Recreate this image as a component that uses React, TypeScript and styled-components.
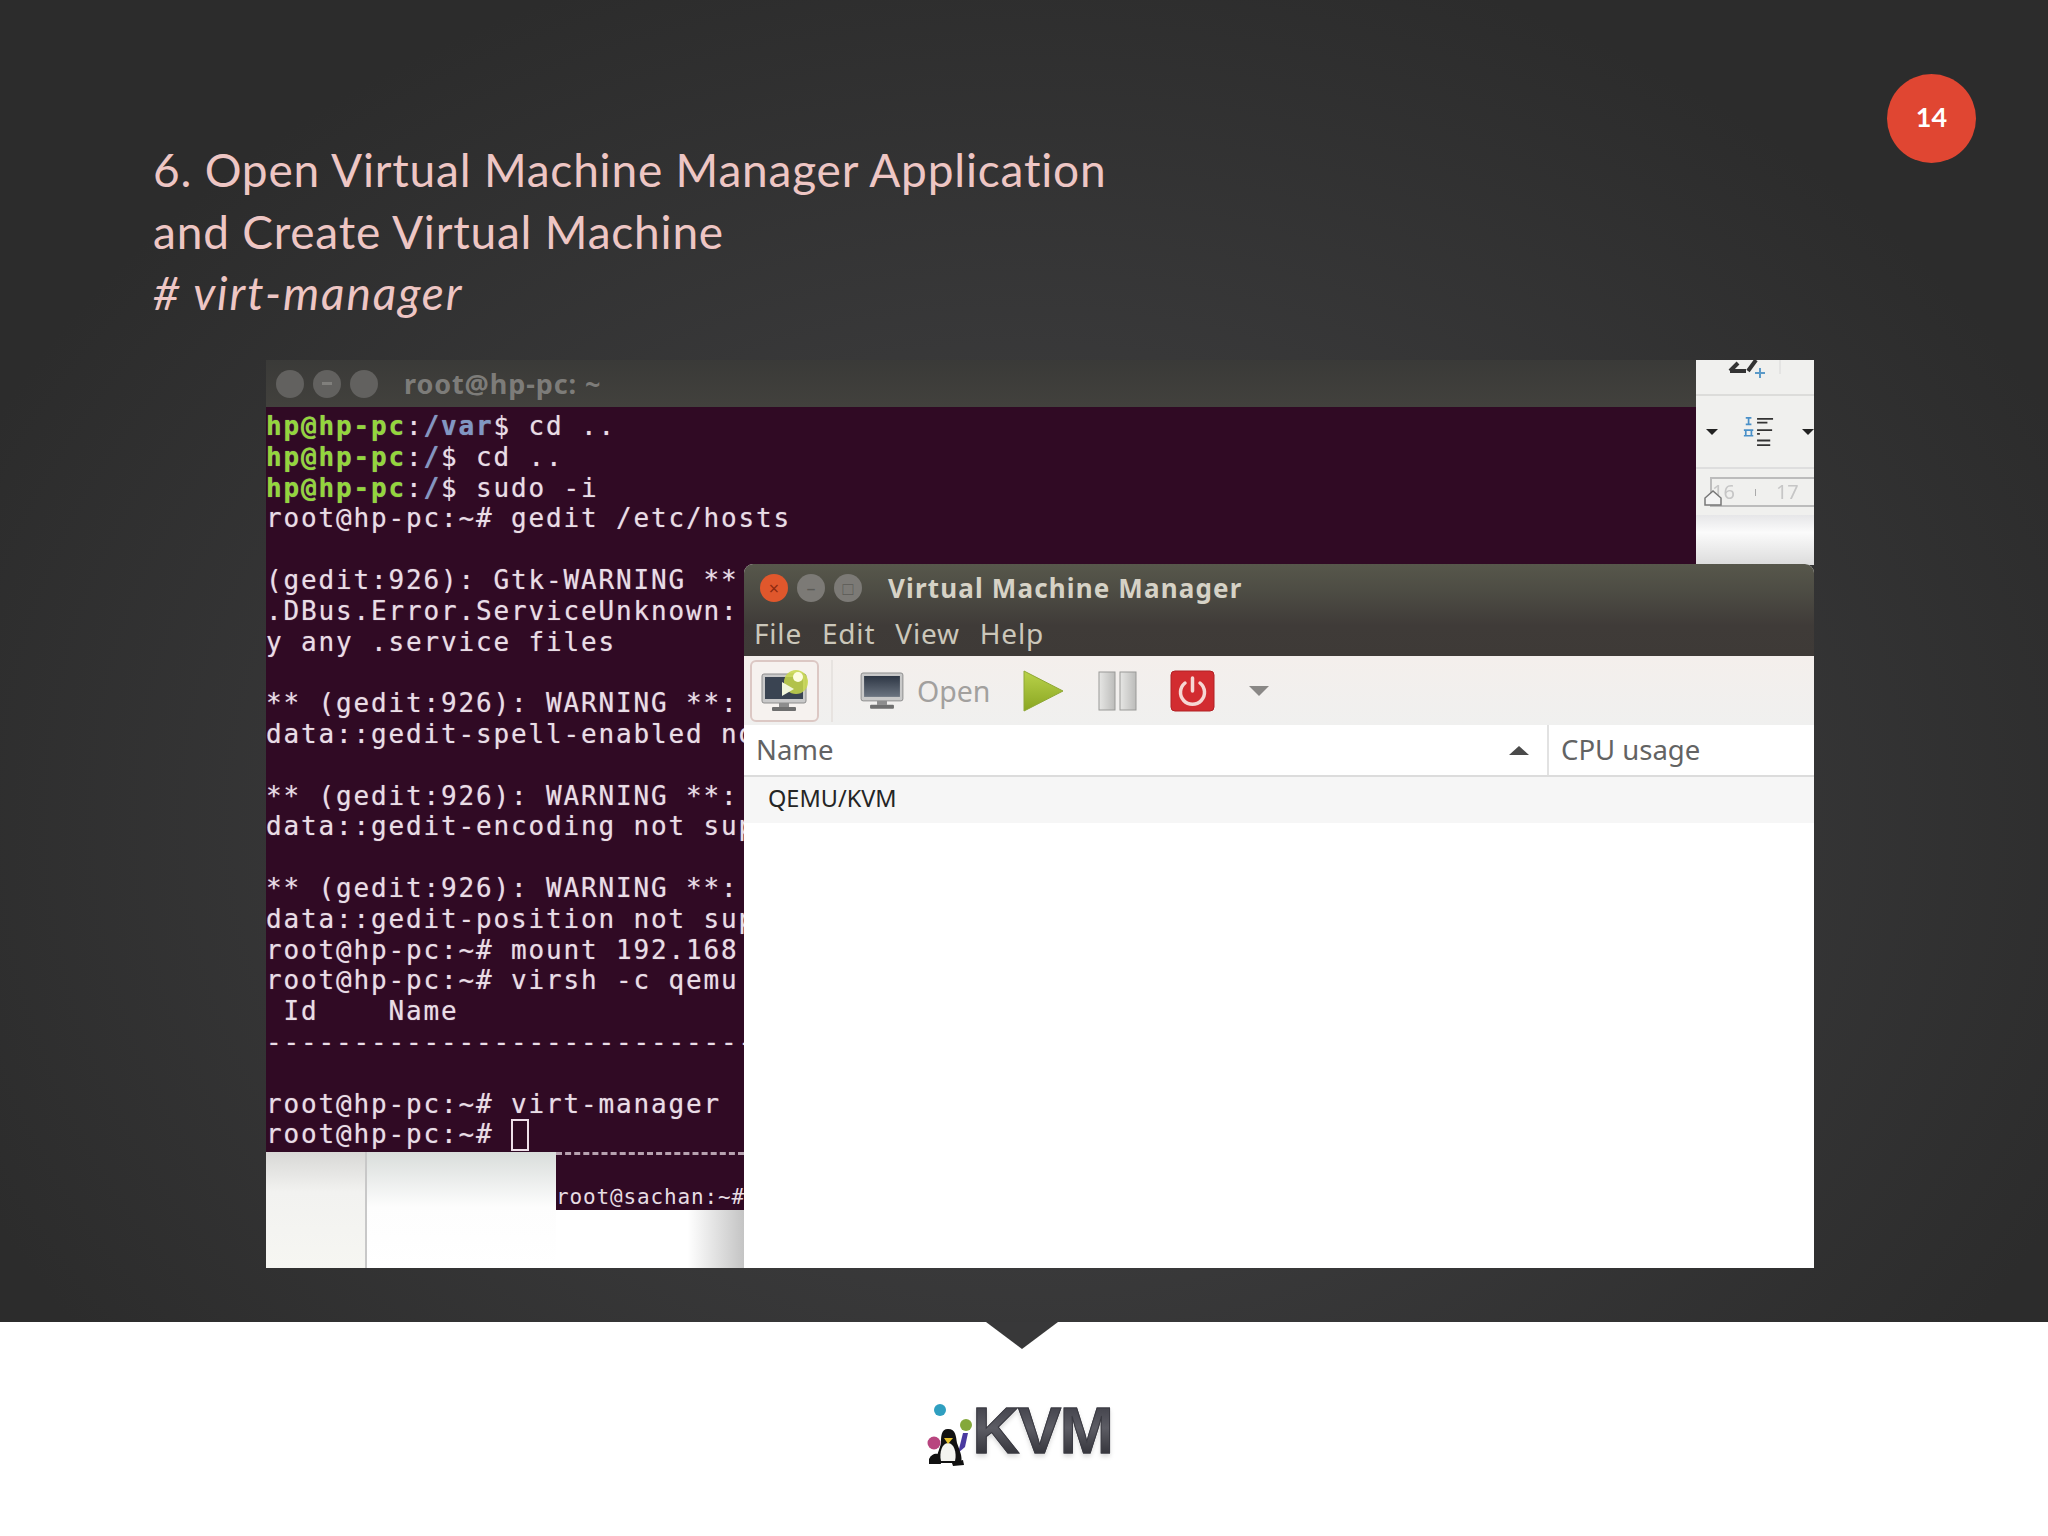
import React from "react";
import styled, { createGlobalStyle } from "styled-components";

const Global = createGlobalStyle`
  html, body { margin: 0; padding: 0; background: #fff; }
  #root { width: 2048px; height: 1536px; overflow: hidden; }
`;

const Slide = styled.div`
  position: relative;
  width: 2048px;
  height: 1536px;
  display: flex;
  flex-direction: column;
  background: #fff;
`;

const Stage = styled.section`
  position: relative;
  height: 1322px;
  flex: none;
  background:
    radial-gradient(ellipse 1150px 900px at 50% 62%, #414142 0%, #3a3a3b 45%, #2c2c2c 100%);
`;

const Heading = styled.h1`
  margin: 0;
  height: 360px;
  box-sizing: border-box;
  padding: 139px 0 0 153px;
  font-family: Lato, "Open Sans", sans-serif;
  font-weight: 400;
  font-size: 46px;
  line-height: 61.5px;
  color: #eec6c4;
`;

const HeadingLine = styled.div<{ $italic?: boolean }>`
  font-style: ${(p) => (p.$italic ? "italic" : "normal")};
  letter-spacing: ${(p) => (p.$italic ? "1.9px" : "0.8px")};
  white-space: pre;
`;

const PageBadge = styled.div`
  position: absolute;
  left: 1887px;
  top: 74px;
  width: 89px;
  height: 89px;
  box-sizing: border-box;
  padding-bottom: 4px;
  border-radius: 50%;
  background: #e04632;
  color: #fff;
  display: flex;
  align-items: center;
  justify-content: center;
  font-family: Lato, sans-serif;
  font-weight: 700;
  font-size: 27px;
`;

const Shot = styled.div`
  position: relative;
  margin-left: 266px;
  width: 1548px;
  height: 908px;
  display: flex;
  overflow: hidden;
  filter: blur(0.55px);
  font-family: "Noto Sans", sans-serif;
`;

const Terminal = styled.div`
  width: 1430px;
  flex: none;
  display: flex;
  flex-direction: column;
  background: #300a24;
`;

const TermTitleBar = styled.div`
  height: 47px;
  flex: none;
  display: flex;
  align-items: center;
  background: linear-gradient(#3a3a38, #42413d);
  padding-left: 10px;
  gap: 9px;
`;

const FadedDot = styled.span`
  width: 28px;
  height: 28px;
  border-radius: 50%;
  background: #62615f;
  display: flex;
  align-items: center;
  justify-content: center;
`;

const FadedGlyph = styled.span`
  width: 10px;
  height: 3px;
  background: #807f7c;
`;

const TermTitle = styled.span`
  margin-left: 17px;
  font-size: 27px;
  font-weight: 700;
  letter-spacing: 0.9px;
  color: #7d7c79;
`;

const TermBody = styled.div`
  flex: 1;
  padding-top: 4px;
  overflow: hidden;
  font-family: "DejaVu Sans Mono", monospace;
  font-size: 26px;
  letter-spacing: 1.85px;
  line-height: 30.8px;
  color: #e9dde6;
  text-shadow: 0 0 1px rgba(233, 221, 230, 0.55);
`;

const TermLine = styled.div`
  height: 30.8px;
  white-space: pre;
`;

const Green = styled.span`
  color: #93d63c;
  font-weight: 700;
`;

const Blue = styled.span`
  color: #7f97c4;
  font-weight: 700;
`;

const Cursor = styled.span`
  display: inline-block;
  width: 18px;
  height: 32px;
  box-sizing: border-box;
  border: 2px solid #efdfea;
  vertical-align: -8px;
`;

const BottomStrip = styled.div`
  height: 116px;
  flex: none;
  display: flex;
  background: #fff;
`;

const DockPanel = styled.div`
  width: 101px;
  flex: none;
  background: linear-gradient(#d8d8d6 0, #f2f2f0 40px, #f6f6f2 100%);
  border-right: 2px solid #c8c8c8;
  box-sizing: border-box;
`;

const SheetPanel = styled.div`
  width: 189px;
  flex: none;
  background: linear-gradient(#d9dddb 0, #fdfdfd 55px, #fff 100%);
`;

const BackTerminal = styled.div`
  width: 188px;
  flex: none;
  align-self: stretch;
  display: flex;
  flex-direction: column;
  background: linear-gradient(90deg, #fff 70%, #c4c4c4 100%);
`;

const BackTermScreen = styled.div`
  height: 58px;
  box-sizing: border-box;
  background: #300a24;
  border-top: 3px dashed #b7a2b0;
  overflow: hidden;
  font-family: "DejaVu Sans Mono", monospace;
  font-size: 21px;
  letter-spacing: 0.85px;
  line-height: 28px;
  color: #e6dce3;
  padding-top: 28px;
  white-space: pre;
`;

const OfficeWindow = styled.div`
  flex: 1;
  height: 205px;
  position: relative;
  overflow: hidden;
  display: flex;
  flex-direction: column;
  background: #f0f0ee;
`;

const OfficeTop = styled.div`
  height: 34px;
  flex: none;
  border-bottom: 2px solid #dcdcda;
  position: relative;
  overflow: hidden;
`;

const OfficeBar = styled.div`
  height: 71px;
  flex: none;
  border-bottom: 2px solid #dedede;
  display: flex;
  align-items: center;
  padding-left: 10px;
`;

const TinyArrow = styled.span<{ $after?: boolean }>`
  width: 0;
  height: 0;
  margin-left: ${(p) => (p.$after ? "28px" : "0")};
  border-left: 6px solid transparent;
  border-right: 6px solid transparent;
  border-top: 6px solid #222;
`;

const ListIcon = styled.svg`
  margin-left: 24px;
`;

const Ruler = styled.div`
  margin: 8px 0 0 14px;
  height: 26px;
  border: 2px solid #bcbcbc;
  border-right: none;
  display: flex;
  align-items: center;
  gap: 20px;
  font-size: 20px;
  line-height: 20px;
  color: #c6c6c6;
  position: relative;
`;

const RulerTick = styled.span`
  width: 1px;
  height: 7px;
  background: #aaa;
`;

const IndentMarker = styled.svg`
  position: absolute;
  left: -8px;
  top: 11px;
`;

const OfficeFoot = styled.div`
  flex: 1;
  background: linear-gradient(#e6e6e8 0, #fbfbfb 35%, #dcdcdc 100%);
  margin-top: 8px;
`;

const ManagerWindow = styled.div`
  position: absolute;
  left: 478px;
  top: 204px;
  right: 0;
  bottom: 0;
  display: flex;
  flex-direction: column;
  background: #fff;
  border-radius: 9px 9px 0 0;
  overflow: hidden;
`;

const ManagerChrome = styled.div`
  height: 92px;
  flex: none;
  background: linear-gradient(#57574b 0, #4c4b43 30px, #3f3b38 62px, #3e3a37 100%);
  display: flex;
  flex-direction: column;
`;

const ManagerTitleBar = styled.div`
  height: 46px;
  flex: none;
  display: flex;
  align-items: center;
  padding: 2px 0 0 16px;
  box-sizing: border-box;
  gap: 9px;
`;

const WinDot = styled.span<{ $close?: boolean }>`
  width: 28px;
  height: 28px;
  border-radius: 50%;
  background: ${(p) => (p.$close ? "#e0572c" : "#7c7a76")};
  display: flex;
  align-items: center;
  justify-content: center;
  font-size: 18px;
  line-height: 1;
  color: ${(p) => (p.$close ? "#8c2a10" : "#5b5a56")};
`;

const ManagerTitle = styled.span`
  margin-left: 17px;
  font-size: 26px;
  font-weight: 700;
  letter-spacing: 1.15px;
  color: #d6d2c6;
`;

const MenuRow = styled.nav`
  flex: 1;
  display: flex;
  align-items: center;
  padding-left: 10px;
  gap: 20px;
`;

const MenuItem = styled.span`
  font-size: 28px;
  line-height: 34px;
  letter-spacing: 0.8px;
  color: #cbc7ba;
`;

const Toolbar = styled.div`
  height: 69px;
  flex: none;
  display: flex;
  align-items: center;
  background: linear-gradient(#f4efec, #f0f0ef);
  padding-left: 6px;
`;

const ActiveTool = styled.div`
  width: 69px;
  height: 62px;
  box-sizing: border-box;
  border: 2px solid #dcc8c4;
  border-radius: 6px;
  display: flex;
  align-items: center;
  justify-content: center;
  background: #f6f2ef;
`;

const ToolDivider = styled.span`
  width: 2px;
  height: 62px;
  background: #e7e3e0;
  margin: 0 27px 0 12px;
`;

const OpenLabel = styled.span`
  margin: 0 32px 0 13px;
  font-size: 28.5px;
  line-height: 34px;
  color: #a2a09e;
`;

const ToolIcon = styled.svg<{ $gap: number }>`
  margin-right: ${(p) => p.$gap}px;
  flex: none;
`;

const MoreArrow = styled.span`
  width: 0;
  height: 0;
  border-left: 10px solid transparent;
  border-right: 10px solid transparent;
  border-top: 10px solid #8a8886;
`;

const HeaderRow = styled.div`
  height: 50px;
  flex: none;
  display: flex;
  background: #fff;
  border-bottom: 2px solid #dcdcdc;
  color: #636363;
  font-size: 27.5px;
  line-height: 34px;
`;

const NameHeader = styled.div`
  width: 805px;
  box-sizing: border-box;
  padding: 0 18px 0 12px;
  display: flex;
  align-items: center;
  justify-content: space-between;
  border-right: 2px solid #e2e2e2;
`;

const SortArrow = styled.span`
  width: 0;
  height: 0;
  border-left: 10px solid transparent;
  border-right: 10px solid transparent;
  border-bottom: 9px solid #4a4a4a;
`;

const CpuHeader = styled.div`
  padding-left: 12px;
  display: flex;
  align-items: center;
`;

const HostRow = styled.div`
  height: 46px;
  flex: none;
  box-sizing: border-box;
  padding: 0 0 5px 24px;
  display: flex;
  align-items: center;
  background: #f6f6f6;
  color: #252525;
  font-size: 23.5px;
`;

const Footer = styled.footer`
  flex: 1;
  position: relative;
  display: flex;
  justify-content: center;
  background: #fff;
`;

const Notch = styled.span`
  position: absolute;
  left: 986px;
  top: 0;
  width: 0;
  height: 0;
  border-left: 36px solid transparent;
  border-right: 36px solid transparent;
  border-top: 27px solid #383839;
`;

const Logo = styled.div`
  margin: 81px 0 0 -12px;
  height: 70px;
  display: flex;
  align-items: flex-start;
`;

const KvmWord = styled.span`
  margin: -3px 0 0 -3px;
  font-family: "Liberation Sans", sans-serif;
  font-weight: 700;
  font-size: 65px;
  line-height: 62px;
  letter-spacing: -1.4px;
  -webkit-text-stroke: 1px #3a3a42;
  background: linear-gradient(#3d3d46 0%, #5c5c64 45%, #2a2a30 100%);
  -webkit-background-clip: text;
  background-clip: text;
  color: transparent;
  filter: drop-shadow(0 3px 2px rgba(0, 0, 0, 0.14));
`;

const Monitor = ({ w = 44 }: { w?: number }) => (
  <svg width={w} height={w * 0.86} viewBox="0 0 44 38">
    <defs>
      <linearGradient id="scr" x1="0" y1="0" x2="0" y2="1">
        <stop offset="0" stopColor="#2d3644" />
        <stop offset="1" stopColor="#6b7480" />
      </linearGradient>
    </defs>
    <rect x="1" y="1" width="42" height="28" rx="2" fill="#c9c9c9" stroke="#8d8d8d" />
    <rect x="4" y="4" width="36" height="21" fill="url(#scr)" />
    <rect x="17" y="29" width="10" height="4" fill="#8d8d8d" />
    <rect x="10" y="33" width="24" height="4" rx="1" fill="#6f6f6f" />
  </svg>
);

const Penguin = () => (
  <svg width="52" height="66" viewBox="0 0 52 66">
    <circle cx="17" cy="7" r="6" fill="#2f9fc0" />
    <circle cx="43" cy="22" r="6" fill="#84a83a" />
    <circle cx="11" cy="40" r="6.5" fill="#b8457f" />
    <path d="M40 30 L45 30 L42 44 L35 50 Z" fill="#4a3aa0" />
    <path d="M25 26 C33 26 33 34 34 40 C36 46 40 54 38 60 L14 60 C12 54 17 46 18 40 C18 34 18 26 25 26 Z" fill="#111" />
    <path d="M25 40 C31 40 34 50 32 58 L18 58 C16 50 19 40 25 40 Z" fill="#f4f4f0" />
    <path d="M21 35 L30 35 L25 41 Z" fill="#e7c22c" />
    <path d="M6 56 C9 50 14 50 16 52 L18 61 L6 61 Z" fill="#111" />
    <path d="M29 60 L40 57 L41 62 L30 63 Z" fill="#111" />
  </svg>
);

type Seg = { t: string; k?: "g" | "b" };

const prompt = (path: string, rest: string): Seg[] => [
  { t: "hp@hp-pc", k: "g" },
  { t: ":" },
  { t: path, k: "b" },
  { t: rest },
];

const lines: Seg[][] = [
  prompt("/var", "$ cd .."),
  prompt("/", "$ cd .."),
  prompt("/", "$ sudo -i"),
  [{ t: "root@hp-pc:~# gedit /etc/hosts" }],
  [{ t: "" }],
  [{ t: "(gedit:926): Gtk-WARNING **" }],
  [{ t: ".DBus.Error.ServiceUnknown:" }],
  [{ t: "y any .service files" }],
  [{ t: "" }],
  [{ t: "** (gedit:926): WARNING **:" }],
  [{ t: "data::gedit-spell-enabled no" }],
  [{ t: "" }],
  [{ t: "** (gedit:926): WARNING **:" }],
  [{ t: "data::gedit-encoding not sup" }],
  [{ t: "" }],
  [{ t: "** (gedit:926): WARNING **:" }],
  [{ t: "data::gedit-position not sup" }],
  [{ t: "root@hp-pc:~# mount 192.168" }],
  [{ t: "root@hp-pc:~# virsh -c qemu" }],
  [{ t: " Id    Name" }],
  [{ t: "----------------------------" }],
  [{ t: "" }],
  [{ t: "root@hp-pc:~# virt-manager" }],
];

export default function App() {
  return (
    <Slide>
      <Global />
      <Stage>
        <Heading>
          <HeadingLine>6. Open Virtual Machine Manager Application</HeadingLine>
          <HeadingLine>and Create Virtual Machine</HeadingLine>
          <HeadingLine $italic># virt-manager</HeadingLine>
        </Heading>
        <PageBadge>14</PageBadge>
        <Shot>
          <Terminal>
            <TermTitleBar>
              <FadedDot />
              <FadedDot>
                <FadedGlyph />
              </FadedDot>
              <FadedDot />
              <TermTitle>root@hp-pc: ~</TermTitle>
            </TermTitleBar>
            <TermBody>
              {lines.map((l, i) => (
                <TermLine key={i}>
                  {l.map((s, j) =>
                    s.k === "g" ? (
                      <Green key={j}>{s.t}</Green>
                    ) : s.k === "b" ? (
                      <Blue key={j}>{s.t}</Blue>
                    ) : (
                      <span key={j}>{s.t}</span>
                    )
                  )}
                </TermLine>
              ))}
              <TermLine>
                root@hp-pc:~# <Cursor />
              </TermLine>
            </TermBody>
            <BottomStrip>
              <DockPanel />
              <SheetPanel />
              <BackTerminal>
                <BackTermScreen>root@sachan:~#</BackTermScreen>
              </BackTerminal>
            </BottomStrip>
          </Terminal>
          <OfficeWindow>
            <OfficeTop>
              <svg width="118" height="34" viewBox="0 0 118 34">
                <path d="M34 -6 L52 -6 M34 11 L50 11 M34 11 L42 3 M60 0 L52 11" stroke="#333" strokeWidth="4" fill="none" />
                <path d="M64 8 V18 M59 13 H69" stroke="#5b9ac8" strokeWidth="2" />
                <path d="M84 0 V14" stroke="#d8d8d8" strokeWidth="1" />
              </svg>
            </OfficeTop>
            <OfficeBar>
              <TinyArrow />
              <ListIcon width="34" height="34" viewBox="0 0 34 34">
                <path d="M4 2 H10 M7 2 V9 M4 9 H10 M2 15 H12 M4 15 V21 M10 15 V21 M2 21 H12" stroke="#4a90c8" strokeWidth="1.8" fill="none" />
                <path d="M16 3 H33 M16 7 H27 M16 15 H32 M16 19 H19 M16 26 H30 M16 31 H30" stroke="#333" strokeWidth="2" />
              </ListIcon>
              <TinyArrow $after />
            </OfficeBar>
            <Ruler>
              <span>16</span>
              <RulerTick />
              <span>17</span>
              <IndentMarker width="18" height="16" viewBox="0 0 18 16">
                <path d="M1 15 V8 L9 1 L17 8 V15 Z" fill="#f4f4f4" stroke="#777" strokeWidth="1.5" />
              </IndentMarker>
            </Ruler>
            <OfficeFoot />
          </OfficeWindow>
          <ManagerWindow>
            <ManagerChrome>
              <ManagerTitleBar>
                <WinDot $close>×</WinDot>
                <WinDot>–</WinDot>
                <WinDot>□</WinDot>
                <ManagerTitle>Virtual Machine Manager</ManagerTitle>
              </ManagerTitleBar>
              <MenuRow>
                <MenuItem>File</MenuItem>
                <MenuItem>Edit</MenuItem>
                <MenuItem>View</MenuItem>
                <MenuItem>Help</MenuItem>
              </MenuRow>
            </ManagerChrome>
            <Toolbar>
              <ActiveTool>
                <svg width="50" height="46" viewBox="0 0 50 46">
                  <rect x="2" y="6" width="44" height="29" rx="2" fill="#c9c9c9" stroke="#8d8d8d" />
                  <rect x="5" y="9" width="38" height="22" fill="#3a4452" />
                  <rect x="19" y="35" width="10" height="4" fill="#8d8d8d" />
                  <rect x="12" y="39" width="24" height="4" rx="1" fill="#6f6f6f" />
                  <circle cx="36" cy="14" r="12" fill="#c8d84a" opacity="0.85" />
                  <circle cx="38" cy="9" r="5" fill="#fdfde0" />
                  <path d="M22 14 L34 21 L22 28 Z" fill="#f2f6dc" />
                </svg>
              </ActiveTool>
              <ToolDivider />
              <Monitor w={44} />
              <OpenLabel>Open</OpenLabel>
              <ToolIcon $gap={34} width="42" height="42" viewBox="0 0 42 42">
                <defs>
                  <linearGradient id="pl" x1="0" y1="0" x2="0" y2="1">
                    <stop offset="0" stopColor="#b9d24a" />
                    <stop offset="1" stopColor="#8aa622" />
                  </linearGradient>
                </defs>
                <path d="M2 1 L41 21 L2 41 Z" fill="url(#pl)" stroke="#8fa836" strokeWidth="1" />
              </ToolIcon>
              <ToolIcon $gap={33} width="39" height="40" viewBox="0 0 39 40">
                <defs>
                  <linearGradient id="pa" x1="0" y1="0" x2="1" y2="0">
                    <stop offset="0" stopColor="#e6e6e4" />
                    <stop offset="1" stopColor="#bcbcba" />
                  </linearGradient>
                </defs>
                <rect x="1" y="1" width="16" height="38" fill="url(#pa)" stroke="#9a9a98" />
                <rect x="22" y="1" width="16" height="38" fill="url(#pa)" stroke="#9a9a98" />
              </ToolIcon>
              <ToolIcon $gap={34} width="45" height="42" viewBox="0 0 45 42">
                <rect x="1" y="1" width="43" height="40" rx="4" fill="#d22c30" stroke="#b22024" />
                <path d="M15 13 A12 12 0 1 0 30 13" fill="none" stroke="#f6d8d4" strokeWidth="3.5" strokeLinecap="round" />
                <path d="M22.5 8 V21" stroke="#f6d8d4" strokeWidth="3.5" strokeLinecap="round" />
              </ToolIcon>
              <MoreArrow />
            </Toolbar>
            <HeaderRow>
              <NameHeader>
                <span>Name</span>
                <SortArrow />
              </NameHeader>
              <CpuHeader>CPU usage</CpuHeader>
            </HeaderRow>
            <HostRow>QEMU/KVM</HostRow>
          </ManagerWindow>
        </Shot>
      </Stage>
      <Footer>
        <Notch />
        <Logo>
          <Penguin />
          <KvmWord>KVM</KvmWord>
        </Logo>
      </Footer>
    </Slide>
  );
}
